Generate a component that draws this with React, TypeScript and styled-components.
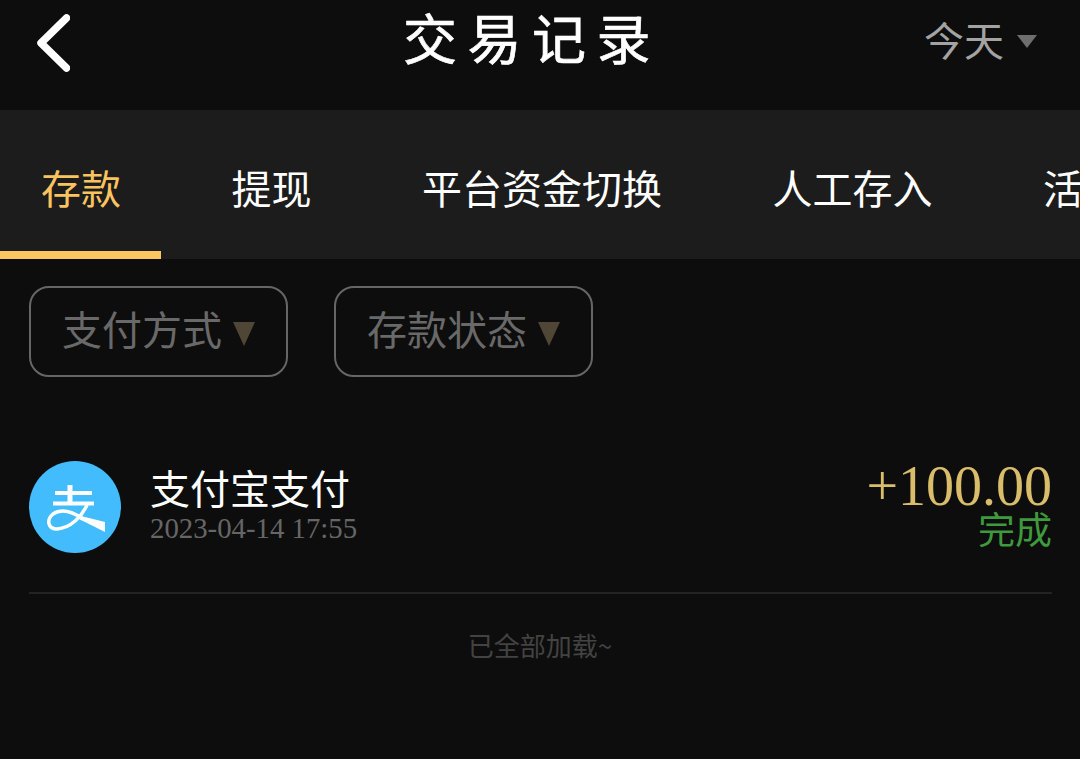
import styled, { createGlobalStyle } from 'styled-components';

const GlobalStyle = createGlobalStyle`
  html, body {
    margin: 0;
    padding: 0;
    background-color: #0d0d0d;
  }
  * {
    box-sizing: border-box;
  }
`;

const sans = `"Noto Sans CJK SC", "Noto Sans", sans-serif`;
const serif = `"Liberation Serif", "Noto Sans CJK SC", serif`;

const Page = styled.div`
  width: 1080px;
  height: 759px;
  overflow: hidden;
  background-color: #0d0d0d;
  font-family: ${sans};
`;

const Header = styled.header`
  display: grid;
  grid-template-columns: 1fr auto 1fr;
  align-items: center;
  height: 110px;
  padding: 0 43px 28px 34px;
`;

const BackButton = styled.div`
  display: flex;
  align-items: center;
  padding-top: 4px;
`;

const Title = styled.h1`
  margin: 0 7px 0 0;
  padding-bottom: 8px;
  font-size: 54px;
  line-height: 60px;
  font-weight: 400;
  letter-spacing: 10.5px;
  color: #fff;
  -webkit-text-stroke: 0.7px #fff;
`;

const DateFilter = styled.div`
  display: flex;
  justify-content: flex-end;
  align-items: center;
  gap: 13px;
  padding-bottom: 4px;
  font-size: 40px;
  line-height: 56px;
  color: #a3a3a3;
`;

const Tabs = styled.nav`
  display: flex;
  gap: 29.5px;
  height: 149px;
  background-color: #1c1c1c;
  overflow: hidden;
`;

const Tab = styled.div<{ $active?: boolean }>`
  flex: none;
  height: 149px;
  padding: 0 40px 0 41px;
  line-height: 154px;
  font-size: 40px;
  color: ${(p) => (p.$active ? '#fac35f' : '#fff')};
  border-bottom: 8px solid ${(p) => (p.$active ? '#fcc762' : 'transparent')};
`;

const Filters = styled.div`
  display: flex;
  gap: 46px;
  padding: 27px 29px 0;
`;

const FilterButton = styled.div`
  display: flex;
  align-items: center;
  gap: 11px;
  height: 91px;
  padding: 0 31px 8px 31px;
  border: 2px solid #666;
  border-radius: 20px;
  font-size: 40px;
  color: #696969;
  white-space: nowrap;
`;

const Caret = styled.span<{ $w: number; $h: number; $color: string; $drop: number }>`
  flex: none;
  width: 0;
  height: 0;
  margin-top: ${(p) => p.$drop}px;
  border-left: ${(p) => p.$w / 2}px solid transparent;
  border-right: ${(p) => p.$w / 2}px solid transparent;
  border-top: ${(p) => p.$h}px solid ${(p) => p.$color};
`;

const Record = styled.div`
  display: flex;
  align-items: center;
  margin: 84px 28px 0 29px;
  padding-bottom: 39px;
  border-bottom: 2px solid #232323;
`;

const Avatar = styled.div`
  flex: none;
  width: 92px;
  height: 92px;
  border-radius: 50%;
  background-color: #42bcfd;
`;

const RecordInfo = styled.div`
  flex: 1;
  margin: -13px 0 0 29px;
`;

const RecordName = styled.div`
  font-size: 40px;
  line-height: 54px;
  color: #fff;
`;

const RecordDate = styled.div`
  font-family: ${serif};
  font-size: 28.8px;
  line-height: 28px;
  color: #666;
`;

const RecordAmount = styled.div`
  display: flex;
  flex-direction: column;
  align-items: flex-end;
  margin-top: -8px;
`;

const Amount = styled.div`
  font-family: ${serif};
  font-size: 56px;
  line-height: 50px;
  color: #d9bd6b;
`;

const Status = styled.div`
  font-size: 37px;
  line-height: 34px;
  color: #3e9a3c;
`;

const EndNote = styled.div`
  margin-top: 33px;
  text-align: center;
  font-size: 26px;
  line-height: 36px;
  color: #434343;
`;

function BackIcon() {
  return (
    <svg width='36' height='60' viewBox='0 0 36 60'>
      <path
        d='M32.5 5 L7 30 L32.5 55'
        fill='none'
        stroke='#fff'
        strokeWidth='7.5'
        strokeLinecap='round'
        strokeLinejoin='round'
      />
    </svg>
  );
}

function AlipayLogo() {
  return (
    <svg width='92' height='92' viewBox='0 0 92 92'>
      <g fill='none' stroke='#fff'>
        <path d='M26 32 H63' strokeWidth='4' />
        <path d='M24 42.5 H65' strokeWidth='4' />
        <path d='M41 24 V43' strokeWidth='5' />
        <path
          d='M58 44 C53 55 42 67 28 68 C19 68 17 59 24 53 C33 47 44 51 54 58'
          strokeWidth='3.5'
        />
      </g>
      <path d='M52 55 L76 61 L76 71 L50 58 Z' fill='#fff' />
    </svg>
  );
}

const tabs = ['存款', '提现', '平台资金切换', '人工存入', '活动优惠'];

export default function App() {
  return (
    <>
      <GlobalStyle />
      <Page>
        <Header>
          <BackButton>
            <BackIcon />
          </BackButton>
          <Title>交易记录</Title>
          <DateFilter>
            今天
            <Caret $w={21} $h={13} $color='#6e6e6e' $drop={4} />
          </DateFilter>
        </Header>
        <Tabs>
          {tabs.map((tab, i) => (
            <Tab key={tab} $active={i === 0}>
              {tab}
            </Tab>
          ))}
        </Tabs>
        <Filters>
          <FilterButton>
            支付方式
            <Caret $w={22} $h={24} $color='#4f4636' $drop={12} />
          </FilterButton>
          <FilterButton>
            存款状态
            <Caret $w={22} $h={24} $color='#4f4636' $drop={12} />
          </FilterButton>
        </Filters>
        <Record>
          <Avatar>
            <AlipayLogo />
          </Avatar>
          <RecordInfo>
            <RecordName>支付宝支付</RecordName>
            <RecordDate>2023-04-14 17:55</RecordDate>
          </RecordInfo>
          <RecordAmount>
            <Amount>+100.00</Amount>
            <Status>完成</Status>
          </RecordAmount>
        </Record>
        <EndNote>已全部加载~</EndNote>
      </Page>
    </>
  );
}
